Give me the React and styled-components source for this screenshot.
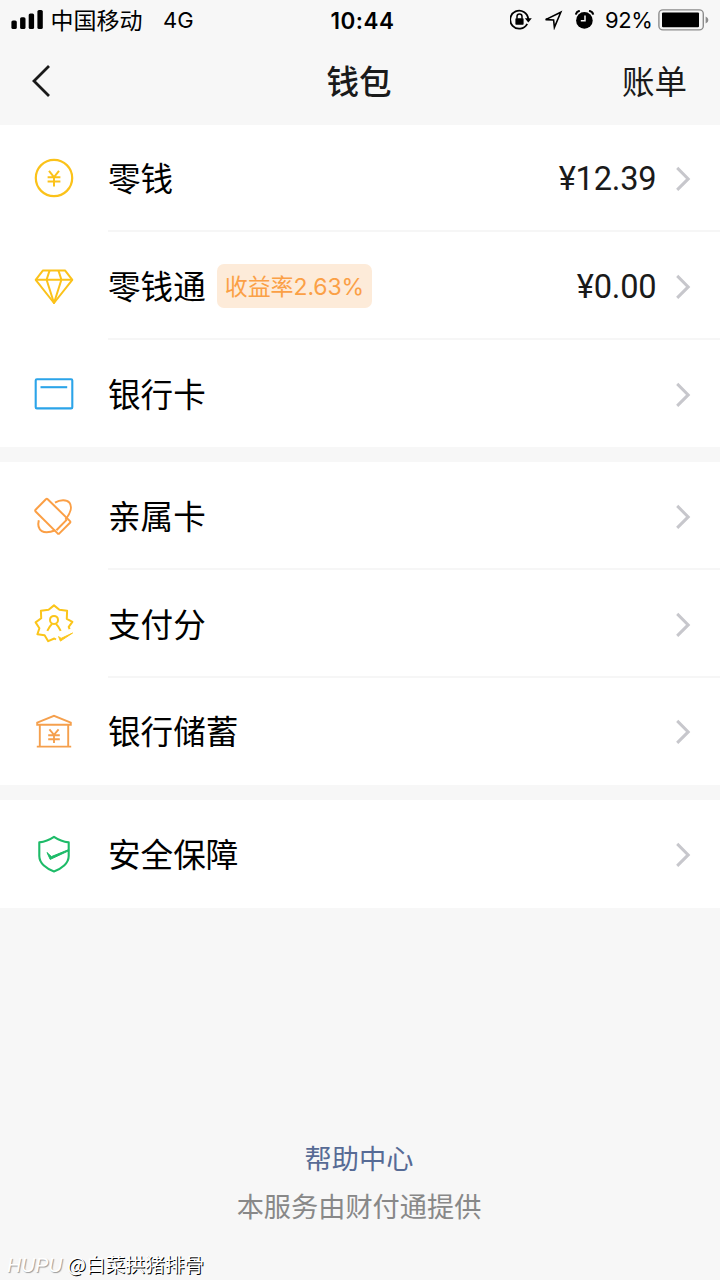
import React from "react";
import styled, { createGlobalStyle } from "styled-components";

const accounts = [
  { icon: <CoinIcon />, label: "零钱", amount: "¥12.39" },
  { icon: <DiamondIcon />, label: "零钱通", tag: "收益率2.63%", amount: "¥0.00" },
  { icon: <CardIcon />, label: "银行卡" },
];

const services = [
  { icon: <FamilyCardIcon />, label: "亲属卡" },
  { icon: <ScoreIcon />, label: "支付分" },
  { icon: <BankIcon />, label: "银行储蓄" },
];

const security = [{ icon: <ShieldIcon />, label: "安全保障" }];

export default function App() {
  const renderGroup = (items) => (
    <Group>
      {items.map((item) => (
        <Row key={item.label}>
          <IconSlot>{item.icon}</IconSlot>
          <RowBody>
            <Label>{item.label}</Label>
            {item.tag ? <Tag>{item.tag}</Tag> : ""}
            <Spacer />
            {item.amount ? <Amount>{item.amount}</Amount> : ""}
            <Chevron />
          </RowBody>
        </Row>
      ))}
    </Group>
  );

  return (
    <>
      <GlobalStyle />
      <Wrapper>
        <StatusBar />
        <NavBar>
          <BackButton aria-label="返回">
            <svg width="20" height="34" viewBox="0 0 20 34" fill="none">
              <path d="M18 2L3 17L18 32" stroke="#1a1a1a" strokeWidth="2.8" />
            </svg>
          </BackButton>
          <Title>钱包</Title>
          <BillLink>账单</BillLink>
        </NavBar>
        <Groups>
          {renderGroup(accounts)}
          {renderGroup(services)}
          {renderGroup(security)}
        </Groups>
        <Footer>
          <HelpLink>帮助中心</HelpLink>
          <Provider>本服务由财付通提供</Provider>
        </Footer>
        <Watermark>
          <Brand>HUPU</Brand>
          <Author>@白菜拱猪排骨</Author>
        </Watermark>
      </Wrapper>
    </>
  );
}

function StatusBar() {
  return (
    <StatusWrapper>
      <StatusSide>
        <svg width="32" height="20" viewBox="0 0 32 20">
          <rect x="0.4" y="10.5" width="5.4" height="8.5" rx="1.6" />
          <rect x="9.1" y="7.2" width="5.4" height="11.8" rx="1.6" />
          <rect x="17.7" y="3.5" width="5.4" height="15.5" rx="1.6" />
          <rect x="26.4" y="0" width="5.4" height="19" rx="1.6" />
        </svg>
        <Carrier>中国移动</Carrier>
        <Network>4G</Network>
      </StatusSide>
      <Time>10:44</Time>
      <StatusSide $end>
        <LockIcon />
        <LocationIcon />
        <AlarmIcon />
        <Percent>92%</Percent>
        <BatteryIcon />
      </StatusSide>
    </StatusWrapper>
  );
}

function LockIcon() {
  return (
    <svg width="24" height="22" viewBox="0 0 24 22" fill="none">
      <path d="M17.2 14.8A9 9 0 1 1 18.2 10" stroke="#000" strokeWidth="1.8" />
      <path d="M14.8 9.3H21.8L18.3 13.6Z" fill="#000" />
      <rect x="5.4" y="9.3" width="8.2" height="6.4" rx="0.8" fill="#000" />
      <path d="M7 9.8V7.6A2.5 2.5 0 0 1 12 7.6V9.8" stroke="#000" strokeWidth="1.5" />
    </svg>
  );
}

function LocationIcon() {
  return (
    <svg width="20" height="20" viewBox="0 0 20 20" fill="none">
      <path d="M1.6 9.6L16.8 2.2L10.4 17.4L9.6 10Z" stroke="#000" strokeWidth="1.6" />
    </svg>
  );
}

function AlarmIcon() {
  return (
    <svg width="20" height="20" viewBox="0 0 20 20" fill="none">
      <circle cx="9.4" cy="10.4" r="8.3" fill="#000" />
      <path d="M10 5.4V10.8H5.8" stroke="#f7f7f7" strokeWidth="1.5" />
      <path d="M0.8 4.6Q1.4 1.4 4.8 0.8M14 0.8Q17.6 1.4 18.2 4.6" stroke="#000" strokeWidth="2" />
    </svg>
  );
}

function BatteryIcon() {
  return (
    <svg width="51" height="22" viewBox="0 0 51 22" fill="none">
      <rect x="0.9" y="0.9" width="44.4" height="20" rx="4" stroke="#8c8c8c" strokeWidth="1.4" />
      <rect x="4" y="3.6" width="37" height="14.6" rx="1" fill="#000" />
      <path d="M47.6 7.4Q50.4 8.4 50.4 11T47.6 14.6Z" fill="#8c8c8c" />
    </svg>
  );
}

function CoinIcon() {
  return (
    <svg width="44" height="44" viewBox="0 0 44 44" fill="none" stroke="#fbc21a">
      <circle cx="22" cy="22" r="18.2" strokeWidth="2.2" />
      <path d="M17 14.8L22 21.2L27 14.8M22 21.2V30.4M15.6 21.2H28.4M15.6 25.4H28.4" strokeWidth="2" />
    </svg>
  );
}

function DiamondIcon() {
  return (
    <svg width="44" height="44" viewBox="0 0 44 44" fill="none" stroke="#fbc21a" strokeWidth="2" strokeLinejoin="round">
      <path d="M11 6.4H33L40.3 15.8L22 39L3.7 15.8Z" />
      <path d="M3.7 15.8H40.3M17.6 6.4L14.6 15.8L22 39L29.4 15.8L26.4 6.4" />
    </svg>
  );
}

function CardIcon() {
  return (
    <svg width="44" height="44" viewBox="0 0 44 44" fill="none" stroke="#2ba4e9" strokeWidth="2.1">
      <rect x="3.7" y="7.2" width="36.6" height="29.2" rx="1.2" />
      <path d="M8.5 15.2H35.2" />
    </svg>
  );
}

function FamilyCardIcon() {
  return (
    <svg width="44" height="44" viewBox="0 0 44 44" fill="none" stroke="#fb9f45" strokeWidth="2" strokeLinejoin="round">
      <path d="M13.9 5.2Q14.8 4.4 15.7 5.2L38 27.1Q38.8 27.9 38 28.7L27.4 39.4Q26.5 40.2 25.6 39.4L3.6 17.5Q2.8 16.6 3.6 15.7Z" />
      <path d="M24.4 36.2L34.8 25.6" />
      <path d="M23 8.6C28 5.6 34.6 5.2 37.4 8.7C40.4 12.6 38.6 19.2 33.4 25.6" />
      <path d="M6.8 26.3C5.6 31.2 6.8 35.2 9.8 37.1C13 39.1 18 38.5 23.4 36.3" />
    </svg>
  );
}

function ScoreIcon() {
  return (
    <svg width="44" height="44" viewBox="0 0 44 44" fill="none" stroke="#fbc51a" strokeWidth="2" strokeLinejoin="round">
      <path d="M37.6 27.2L36.7 24.8L40.4 19.8L34.8 16.8L35.1 8.8L27.4 7.8L22 3.4L16.6 7.8L8.9 8.8L9.2 16.2L3.6 20.4L7.4 26.2L5.4 32.3L12.6 33.3L16.2 39.2L22.3 36.5L24 37.5" />
      <path d="M26.6 34.6L28.4 39.1L40.6 31L29.1 36.4Z" fill="#fbc51a" strokeWidth="1" />
      <circle cx="22" cy="17.9" r="4" />
      <path d="M15.3 28.9C16.6 26.2 18 23.6 20.2 21.7M28.7 28.9C27.4 26.2 26 23.6 23.8 21.7" />
    </svg>
  );
}

function BankIcon() {
  return (
    <svg width="44" height="44" viewBox="0 0 44 44" fill="none" stroke="#f5a04d" strokeWidth="1.9">
      <path d="M5.2 15.8V13.6L22 6.8L38.8 13.6V15.8Z" />
      <path d="M7.8 15.8V37.4M36.2 15.8V37.4M4.8 37.6H39.2" />
      <path d="M17.4 20.4L22 25.8L26.6 20.4M22 25.8V34M16.2 26.2H27.8M16.2 30.2H27.8" />
    </svg>
  );
}

function ShieldIcon() {
  return (
    <svg width="44" height="44" viewBox="0 0 44 44" fill="none" stroke="#1dbb68" strokeWidth="2.1" strokeLinejoin="round">
      <path d="M22 4.9C17.4 8 12.4 9.8 7.3 10.4V24C7.3 31.4 14.6 37 22 39.4C29.4 37 36.7 31.4 36.7 24V10.4C31.6 9.8 26.6 8 22 4.9Z" />
      <path d="M15 20.5L19.4 24.6L36.7 17.6V18.8L18.2 27.4Z" fill="#1dbb68" strokeWidth="1" />
    </svg>
  );
}

function Chevron() {
  return (
    <svg width="16" height="28" viewBox="0 0 16 28" fill="none">
      <path d="M2.2 4.9L13.2 15.9L2.2 26.9" stroke="#c7c7cc" strokeWidth="3" />
    </svg>
  );
}

const GlobalStyle = createGlobalStyle`
  * {
    box-sizing: border-box;
  }
  body {
    margin: 0;
    background: #f7f7f7;
    font-family: "Noto Sans CJK SC", sans-serif;
  }
  svg {
    display: block;
    flex-shrink: 0;
  }
`;

const Wrapper = styled.div`
  display: flex;
  flex-direction: column;
  width: 720px;
  height: 1280px;
  overflow: hidden;
  background: #f7f7f7;
`;

const StatusWrapper = styled.div`
  display: grid;
  grid-template-columns: 1fr auto 1fr;
  align-items: center;
  height: 40px;
  padding: 0 11px;
  color: #000;
`;

const StatusSide = styled.div`
  display: flex;
  align-items: center;
  justify-content: ${(props) => (props.$end ? "flex-end" : "flex-start")};
  gap: ${(props) => (props.$end ? "10.5px" : "7.5px")};
`;

const Carrier = styled.span`
  padding-bottom: 2px;
  font-size: 23px;
  line-height: 34px;
`;

const Network = styled.span`
  margin-left: 13px;
  font-family: Inter, sans-serif;
  font-size: 22px;
`;

const Time = styled.span`
  padding-left: 5px;
  font-family: Inter, sans-serif;
  font-size: 22.5px;
  font-weight: 600;
  letter-spacing: 0.5px;
`;

const Percent = styled.span`
  font-family: Inter, sans-serif;
  font-size: 22px;
  letter-spacing: -0.4px;
  margin-right: -5px;
`;

const NavBar = styled.div`
  display: grid;
  grid-template-columns: 1fr auto 1fr;
  align-items: center;
  height: 84.6px;
  padding: 0 33px 3px 31px;
  color: #1a1a1a;
`;

const BackButton = styled.button`
  justify-self: start;
  padding: 0;
  border: 0;
  background: none;
`;

const Title = styled.h1`
  margin: 0;
  padding-bottom: 1px;
  font-size: 32.5px;
  font-weight: 500;
  line-height: 48px;
`;

const BillLink = styled.span`
  justify-self: end;
  padding-bottom: 1px;
  font-size: 32.5px;
  line-height: 48px;
`;

const Groups = styled.div`
  display: flex;
  flex-direction: column;
  gap: 15px;
`;

const Group = styled.div`
  background: #fff;
`;

const RowBody = styled.div`
  display: flex;
  flex: 1;
  align-items: center;
  padding-right: 28.6px;
  border-bottom: 2px solid #f6f6f6;
`;

const Row = styled.div`
  display: flex;
  height: 107.6px;
  &:last-child ${RowBody} {
    border-bottom-color: transparent;
  }
`;

const IconSlot = styled.div`
  display: flex;
  align-items: center;
  width: 108px;
  padding-left: 31.7px;
`;

const Label = styled.span`
  color: #000;
  font-size: 32.6px;
  line-height: 48px;
`;

const Tag = styled.span`
  display: flex;
  align-items: center;
  height: 44px;
  margin: 2px 0 0 11px;
  padding: 0 8px 2px;
  border-radius: 7px;
  background: #fdebd9;
  color: #fba046;
  font-family: Inter, "Noto Sans CJK SC", sans-serif;
  font-size: 23px;
  letter-spacing: -0.1px;
`;

const Spacer = styled.div`
  flex: 1;
`;

const Amount = styled.span`
  margin-right: 19px;
  padding-top: 4px;
  color: #1a1a1a;
  font-family: Roboto, sans-serif;
  font-size: 32.6px;
  letter-spacing: -0.2px;
  line-height: 48px;
`;

const Footer = styled.div`
  display: flex;
  flex-direction: column;
  align-items: center;
  gap: 8px;
  margin-top: auto;
  padding-right: 2px;
  font-size: 27.2px;
  line-height: 40px;
`;

const HelpLink = styled.a`
  color: #576b95;
`;

const Provider = styled.span`
  color: #888;
`;

const Watermark = styled.div`
  display: flex;
  align-items: center;
  gap: 5px;
  height: 30px;
  margin-top: 25px;
  padding-left: 7px;
`;

const Brand = styled.span`
  color: #fff;
  font-family: "Liberation Sans", sans-serif;
  font-size: 19.5px;
  font-style: italic;
  text-shadow: 1px 1px 1px #999;
`;

const Author = styled.span`
  padding-bottom: 2px;
  color: #fff;
  font-size: 19.7px;
  line-height: 28px;
  text-shadow: 1px 1px 0 #000;
`;
